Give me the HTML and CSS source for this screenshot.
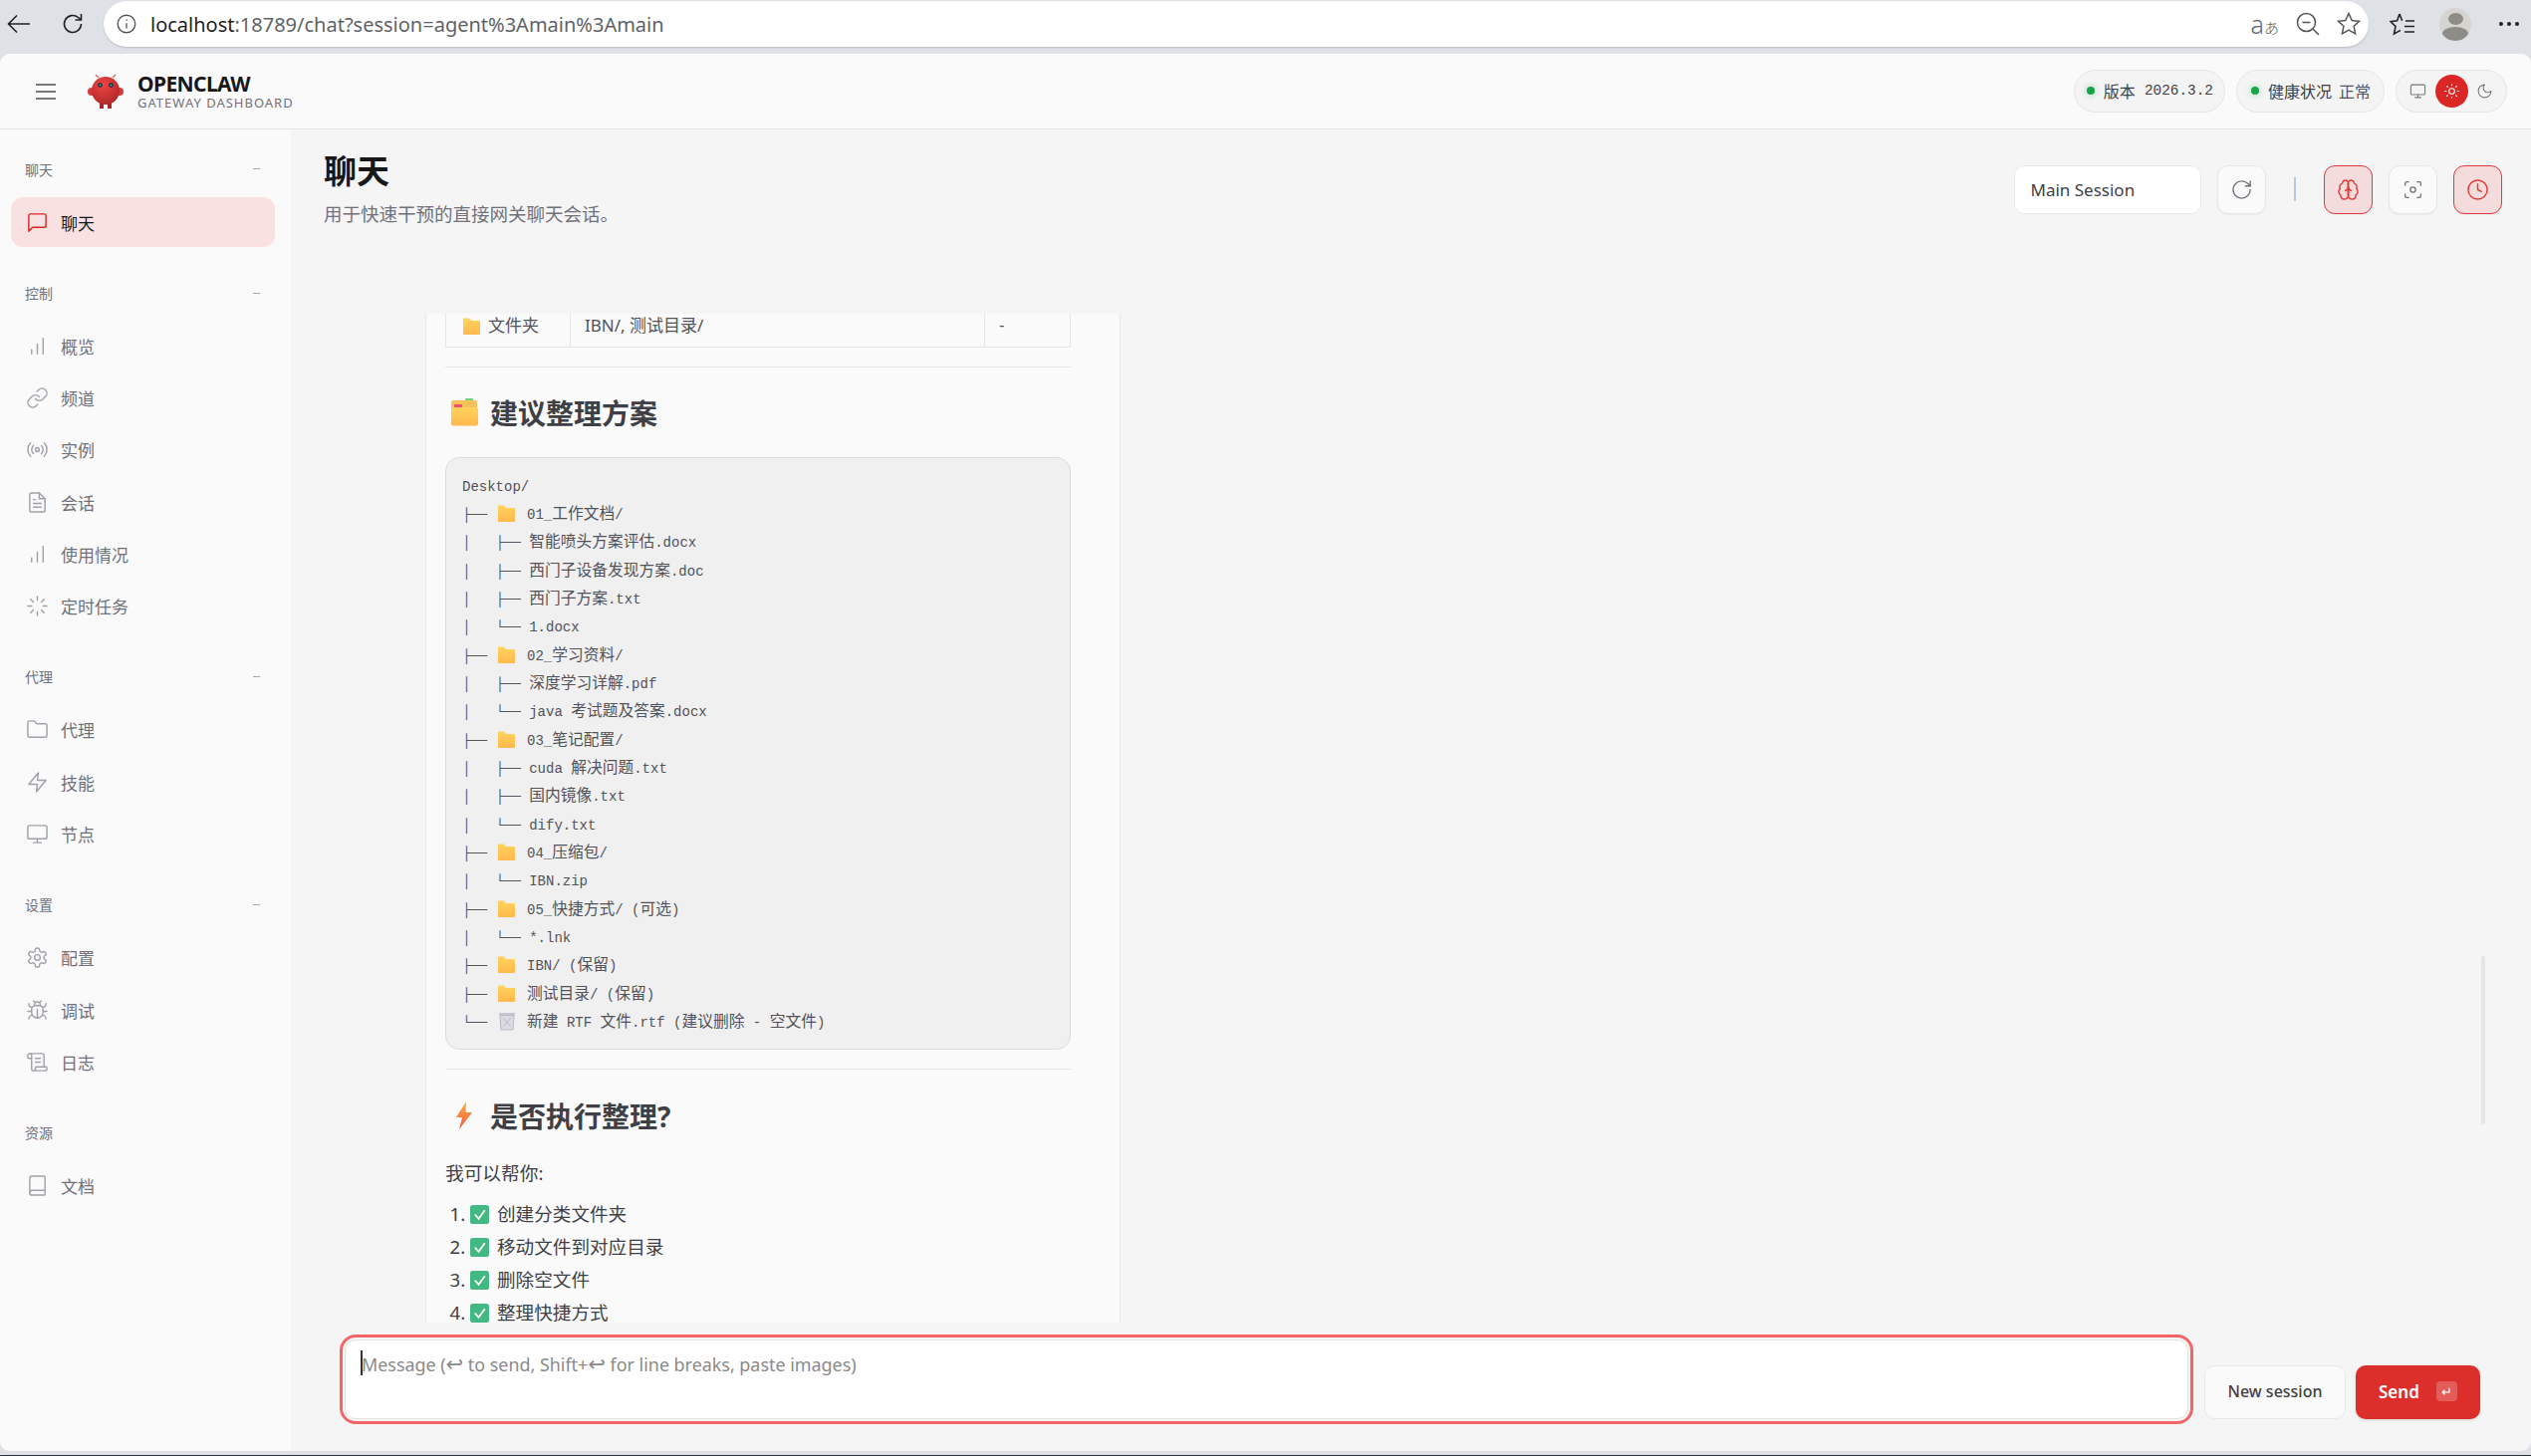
FILE: index.html
```html
<!DOCTYPE html>
<html lang="zh-CN">
<head>
    <meta charset="UTF-8">
    <title>OpenClaw - 聊天</title>
    <link rel="stylesheet" href="styles.css">
</head>
<body>
    <svg class="defs" width="0" height="0">
        <defs>
            <linearGradient id="folderFill" x1="0" y1="0" x2="0" y2="1">
                <stop offset="0" stop-color="#ffd35c"/>
                <stop offset="1" stop-color="#ffb84d"/>
            </linearGradient>
            <linearGradient id="boltFill" x1="0" y1="0" x2="0" y2="1">
                <stop offset="0" stop-color="#fdb043"/>
                <stop offset="1" stop-color="#f4583f"/>
            </linearGradient>
            <radialGradient id="clawFill" cx="0.4" cy="0.3" r="0.8">
                <stop offset="0" stop-color="#ee4444"/>
                <stop offset="1" stop-color="#a92626"/>
            </radialGradient>
            <symbol id="emoji-folder" viewBox="0 0 20 20">
                <path d="M1 3.500a1 1 0 0 1 1-1h5l2 2.500h8a1 1 0 0 1 1 1V18a1 1 0 0 1-1 1H2a1 1 0 0 1-1-1z" fill="url(#folderFill)"/>
            </symbol>
        </defs>
    </svg>

    <!-- Browser toolbar -->
    <div class="browser-bar">
        <svg class="browser-icon back-icon" viewBox="0 0 24 24"><path d="M23 12H2M10 3.500 1.500 12l8.500 8.500"/></svg>
        <svg class="browser-icon reload-icon" viewBox="0 0 24 24"><path d="M20.500 12a8.500 8.500 0 1 1-3-6.500L20.500 8M20.500 2v6h-6"/></svg>
        <div class="address-bar">
            <svg class="site-info" viewBox="0 0 24 24"><circle cx="12" cy="12" r="10.500"/><path d="M12 11v6.500M12 6.500v1.500"/></svg>
            <span class="url"><span class="url-host">localhost</span>:18789/chat?session=agent%3Amain%3Amain</span>
            <span class="translate-glyph">a<small>あ</small></span>
            <svg class="address-icon" viewBox="0 0 24 24"><circle cx="10.500" cy="10.500" r="9"/><path d="M6.500 10.500h8M17 17l6 6"/></svg>
            <svg class="address-icon" viewBox="0 0 24 24"><path d="m12 1.500 3.200 7 7.300.8-5.400 5 1.500 7.500L12 18l-6.600 3.800 1.500-7.500-5.400-5 7.300-.8z"/></svg>
        </div>
        <svg class="browser-icon fav-icon" viewBox="0 0 26 26"><path d="M10 2 7.600 8.800 1 9.600l5 4.800L4.500 22l6.500-3.600M10 2l2.600 6.800M16 9h9M15 14.500h10M15 20h10"/></svg>
        <div class="avatar"><span class="avatar-head"></span><span class="avatar-body"></span></div>
        <div class="browser-dots"><i></i><i></i><i></i></div>
    </div>

    <div class="app">
        <!-- Top bar -->
        <header class="topbar">
            <svg class="hamburger" viewBox="0 0 20 16"><path d="M0 1h20M0 8h20M0 15h20"/></svg>
            <svg class="logo" viewBox="0 0 36 36">
                <path d="M11 4 8 1M25 4l3-3" stroke="#e26a6a" stroke-width="1.500" fill="none"/>
                <rect x="12" y="28" width="4" height="7" fill="#a92626"/>
                <rect x="20" y="28" width="4" height="7" fill="#a92626"/>
                <circle cx="4" cy="18" r="4" fill="#d63a3a"/>
                <circle cx="32" cy="18" r="4" fill="#d63a3a"/>
                <circle cx="18" cy="17" r="14" fill="url(#clawFill)"/>
                <circle cx="12.500" cy="11.500" r="2.200" fill="#10282c"/>
                <circle cx="23.500" cy="11.500" r="2.200" fill="#10282c"/>
                <circle cx="12.500" cy="11.500" r="1" fill="#22c8c8"/>
                <circle cx="23.500" cy="11.500" r="1" fill="#22c8c8"/>
            </svg>
            <div class="brand">
                <div class="brand-name">OPENCLAW</div>
                <div class="brand-sub">GATEWAY DASHBOARD</div>
            </div>
            <div class="topbar-right">
                <div class="status-pill pill-version"><i class="dot"></i><span>版本</span><span class="mono">2026.3.2</span></div>
                <div class="status-pill"><i class="dot"></i><span>健康状况</span><span class="pill-value">正常</span></div>
                <div class="theme-switch">
                    <span class="theme-btn"><svg class="icon" viewBox="0 0 24 24"><rect x="2" y="3" width="20" height="14" rx="2"/><path d="M8 21h8M12 17v4"/></svg></span>
                    <span class="theme-btn active"><svg class="icon" viewBox="0 0 24 24"><circle cx="12" cy="12" r="4"/><path d="M12 2v2M12 20v2M4.930 4.930l1.410 1.410M17.660 17.660l1.410 1.410M2 12h2M20 12h2M6.340 17.660l-1.410 1.410M19.070 4.930l-1.410 1.410"/></svg></span>
                    <span class="theme-btn"><svg class="icon" viewBox="0 0 24 24"><path d="M12 3a6 6 0 0 0 9 9 9 9 0 1 1-9-9Z"/></svg></span>
                </div>
            </div>
        </header>

        <div class="layout">
            <!-- Sidebar -->
            <nav class="sidebar">
                <div class="nav-label"><span>聊天</span><i class="nav-dash"></i></div>
                <a class="nav-item active"><svg class="icon" viewBox="0 0 24 24"><path d="M21 15a2 2 0 0 1-2 2H7l-4 4V5a2 2 0 0 1 2-2h14a2 2 0 0 1 2 2z"/></svg>聊天</a>

                <div class="nav-label"><span>控制</span><i class="nav-dash"></i></div>
                <a class="nav-item"><svg class="icon" viewBox="0 0 24 24"><path d="M18 20V4M12 20v-10M6 20v-4"/></svg>概览</a>
                <a class="nav-item"><svg class="icon" viewBox="0 0 24 24"><path d="M10 13a5 5 0 0 0 7.540.540l3-3a5 5 0 0 0-7.070-7.070l-1.720 1.710"/><path d="M14 11a5 5 0 0 0-7.540-.540l-3 3a5 5 0 0 0 7.070 7.070l1.710-1.710"/></svg>频道</a>
                <a class="nav-item"><svg class="icon" viewBox="0 0 24 24"><path d="M4.900 19.100C1 15.200 1 8.800 4.900 4.900"/><path d="M7.800 16.200c-2.300-2.300-2.300-6.100 0-8.500"/><circle cx="12" cy="12" r="2"/><path d="M16.200 7.800c2.300 2.300 2.300 6.100 0 8.500"/><path d="M19.100 4.900C23 8.800 23 15.100 19.100 19"/></svg>实例</a>
                <a class="nav-item"><svg class="icon" viewBox="0 0 24 24"><path d="M14 2H6a2 2 0 0 0-2 2v16a2 2 0 0 0 2 2h12a2 2 0 0 0 2-2V8z"/><path d="M14 2v6h6M16 13H8M16 17H8M10 9H8"/></svg>会话</a>
                <a class="nav-item"><svg class="icon" viewBox="0 0 24 24"><path d="M18 20V4M12 20v-10M6 20v-4"/></svg>使用情况</a>
                <a class="nav-item"><svg class="icon" viewBox="0 0 24 24"><path d="M12 2v4M12 18v4M4.930 4.930l2.830 2.830M16.240 16.240l2.830 2.830M2 12h4M18 12h4M4.930 19.070l2.830-2.830M16.240 7.760l2.830-2.830"/></svg>定时任务</a>

                <div class="nav-label"><span>代理</span><i class="nav-dash"></i></div>
                <a class="nav-item"><svg class="icon" viewBox="0 0 24 24"><path d="M20 20a2 2 0 0 0 2-2V8a2 2 0 0 0-2-2h-7.900a2 2 0 0 1-1.690-.9L9.600 3.900A2 2 0 0 0 7.930 3H4a2 2 0 0 0-2 2v13a2 2 0 0 0 2 2Z"/></svg>代理</a>
                <a class="nav-item"><svg class="icon" viewBox="0 0 24 24"><path d="M13 2 3 14h9l-1 8 10-12h-9z"/></svg>技能</a>
                <a class="nav-item"><svg class="icon" viewBox="0 0 24 24"><rect x="2" y="3" width="20" height="14" rx="2"/><path d="M8 21h8M12 17v4"/></svg>节点</a>

                <div class="nav-label"><span>设置</span><i class="nav-dash"></i></div>
                <a class="nav-item"><svg class="icon" viewBox="0 0 24 24"><path d="M12.220 2h-.44a2 2 0 0 0-2 2v.18a2 2 0 0 1-1 1.730l-.43.25a2 2 0 0 1-2 0l-.15-.08a2 2 0 0 0-2.730.73l-.22.38a2 2 0 0 0 .73 2.730l.15.1a2 2 0 0 1 1 1.720v.51a2 2 0 0 1-1 1.740l-.15.09a2 2 0 0 0-.73 2.730l.22.38a2 2 0 0 0 2.730.73l.15-.08a2 2 0 0 1 2 0l.43.25a2 2 0 0 1 1 1.730V20a2 2 0 0 0 2 2h.44a2 2 0 0 0 2-2v-.18a2 2 0 0 1 1-1.730l.43-.25a2 2 0 0 1 2 0l.15.08a2 2 0 0 0 2.730-.73l.22-.39a2 2 0 0 0-.73-2.730l-.15-.08a2 2 0 0 1-1-1.740v-.5a2 2 0 0 1 1-1.740l.15-.09a2 2 0 0 0 .73-2.730l-.22-.38a2 2 0 0 0-2.730-.73l-.15.08a2 2 0 0 1-2 0l-.43-.25a2 2 0 0 1-1-1.730V4a2 2 0 0 0-2-2z"/><circle cx="12" cy="12" r="3"/></svg>配置</a>
                <a class="nav-item"><svg class="icon" viewBox="0 0 24 24"><path d="m8 2 1.880 1.880M14.120 3.880 16 2M9 7.130v-1a3 3 0 1 1 6 0v1"/><path d="M12 20c-3.300 0-6-2.700-6-6v-3a4 4 0 0 1 4-4h4a4 4 0 0 1 4 4v3c0 3.300-2.700 6-6 6M12 20v-9M6.530 9C4.600 8.800 3 7.100 3 5M6 13H2M3 21c0-2.100 1.700-3.900 3.800-4M20.970 5c0 2.100-1.600 3.800-3.500 4M22 13h-4M17.200 17c2.100.1 3.800 1.900 3.800 4"/></svg>调试</a>
                <a class="nav-item"><svg class="icon" viewBox="0 0 24 24"><path d="M15 12h-5M15 8h-5M19 17V5a2 2 0 0 0-2-2H4"/><path d="M8 21h12a2 2 0 0 0 2-2v-1a1 1 0 0 0-1-1H11a1 1 0 0 0-1 1v1a2 2 0 1 1-4 0V5a2 2 0 1 0-4 0v2a1 1 0 0 0 1 1h3"/></svg>日志</a>

                <div class="nav-label"><span>资源</span></div>
                <a class="nav-item"><svg class="icon" viewBox="0 0 24 24"><path d="M4 19.500v-15A2.500 2.500 0 0 1 6.500 2H19a1 1 0 0 1 1 1v18a1 1 0 0 1-1 1H6.500a2.500 2.500 0 0 1-2.500-2.500 2.500 2.500 0 0 1 2.500-2.500H20"/></svg>文档</a>
            </nav>

            <!-- Main area -->
            <main class="main">
                <div class="page-head">
                    <div>
                        <h1>聊天</h1>
                        <p class="page-sub">用于快速干预的直接网关聊天会话。</p>
                    </div>
                    <div class="head-actions">
                        <div class="session-select">Main Session</div>
                        <button class="icon-btn"><svg class="icon" viewBox="0 0 24 24"><path d="M21 12a9 9 0 1 1-9-9c2.520 0 4.930 1 6.740 2.740L21 8"/><path d="M21 3v5h-5"/></svg></button>
                        <span class="head-divider"></span>
                        <button class="icon-btn on"><svg class="icon" viewBox="0 0 24 24"><path d="M12 5a3 3 0 1 0-5.997.125 4 4 0 0 0-2.526 5.770 4 4 0 0 0 .556 6.588A4 4 0 1 0 12 18Z"/><path d="M12 5a3 3 0 1 1 5.997.125 4 4 0 0 1 2.526 5.770 4 4 0 0 1-.556 6.588A4 4 0 1 1 12 18Z"/><path d="M15 13a4.500 4.500 0 0 1-3-4 4.500 4.500 0 0 1-3 4M12 18V5"/></svg></button>
                        <button class="icon-btn"><svg class="icon small" viewBox="0 0 24 24"><path d="M3 7V5a2 2 0 0 1 2-2h2M17 3h2a2 2 0 0 1 2 2v2M21 17v2a2 2 0 0 1-2 2h-2M7 21H5a2 2 0 0 1-2-2v-2"/><circle cx="12" cy="12" r="3"/></svg></button>
                        <button class="icon-btn on"><svg class="icon" viewBox="0 0 24 24"><circle cx="12" cy="12" r="10"/><path d="M12 6v6l4 2"/></svg></button>
                    </div>
                </div>

                <div class="thread">
                    <div class="bubble">
                        <table class="file-table">
                            <tr>
                                <td class="col-type"><svg class="emoji" viewBox="0 0 20 20"><use href="#emoji-folder"/></svg>文件夹</td>
                                <td class="col-name">IBN/, 测试目录/</td>
                                <td class="col-size">-</td>
                            </tr>
                        </table>
                        <hr class="rule">
                        <h2>
                            <svg class="emoji-big" viewBox="0 0 28 28">
                                <rect x="15" y="0" width="8" height="5" rx="1" fill="#6dd47e"/>
                                <rect x="9" y="3" width="8" height="5" rx="1" fill="#3f8fdc"/>
                                <rect x="1" y="2" width="26" height="25" rx="2" fill="#f7c25a"/>
                                <rect x="4" y="6" width="8" height="3" fill="#f0506e"/>
                                <rect x="1" y="9" width="27" height="18.500" rx="2" fill="url(#folderFill)"/>
                            </svg>
                            建议整理方案
                        </h2>
                        <div class="tree">
                            <div>Desktop/</div>
                            <div>├── <svg class="tree-emoji" viewBox="0 0 20 20"><use href="#emoji-folder"/></svg> 01_<span class="zh">工作文档</span>/</div>
                            <div>│   ├── <span class="zh">智能喷头方案评估</span>.docx</div>
                            <div>│   ├── <span class="zh">西门子设备发现方案</span>.doc</div>
                            <div>│   ├── <span class="zh">西门子方案</span>.txt</div>
                            <div>│   └── 1.docx</div>
                            <div>├── <svg class="tree-emoji" viewBox="0 0 20 20"><use href="#emoji-folder"/></svg> 02_<span class="zh">学习资料</span>/</div>
                            <div>│   ├── <span class="zh">深度学习详解</span>.pdf</div>
                            <div>│   └── java <span class="zh">考试题及答案</span>.docx</div>
                            <div>├── <svg class="tree-emoji" viewBox="0 0 20 20"><use href="#emoji-folder"/></svg> 03_<span class="zh">笔记配置</span>/</div>
                            <div>│   ├── cuda <span class="zh">解决问题</span>.txt</div>
                            <div>│   ├── <span class="zh">国内镜像</span>.txt</div>
                            <div>│   └── dify.txt</div>
                            <div>├── <svg class="tree-emoji" viewBox="0 0 20 20"><use href="#emoji-folder"/></svg> 04_<span class="zh">压缩包</span>/</div>
                            <div>│   └── IBN.zip</div>
                            <div>├── <svg class="tree-emoji" viewBox="0 0 20 20"><use href="#emoji-folder"/></svg> 05_<span class="zh">快捷方式</span>/ (<span class="zh">可选</span>)</div>
                            <div>│   └── *.lnk</div>
                            <div>├── <svg class="tree-emoji" viewBox="0 0 20 20"><use href="#emoji-folder"/></svg> IBN/ (<span class="zh">保留</span>)</div>
                            <div>├── <svg class="tree-emoji" viewBox="0 0 20 20"><use href="#emoji-folder"/></svg> <span class="zh">测试目录</span>/ (<span class="zh">保留</span>)</div>
                            <div>└── <svg class="tree-emoji" viewBox="0 0 20 20"><path d="M2 2h16v2.500H2z" fill="#c9c7d2"/><path d="M3 4.500h14l-1 14.500H4z" fill="#dcdae2" stroke="#b9b6c6" stroke-width="1"/><path d="m6 7 8 9M14 7l-8 9" stroke="#bdbacb" stroke-width="1"/></svg> <span class="zh">新建</span> RTF <span class="zh">文件</span>.rtf (<span class="zh">建议删除</span> - <span class="zh">空文件</span>)</div>
                        </div>
                        <hr class="rule">
                        <h2 class="h2-run">
                            <svg class="emoji-big" viewBox="0 0 28 28"><path d="M16 0 6 16h6l-3 12 13-17h-6.500z" fill="url(#boltFill)"/></svg>
                            是否执行整理?
                        </h2>
                        <p class="lead">我可以帮你:</p>
                        <ol class="todo">
                            <li><svg class="check" viewBox="0 0 20 20"><rect width="20" height="20" rx="3" fill="#42b883"/><path d="m5 10 4 4.500L15.500 5.500" fill="none" stroke="#fff" stroke-width="1.800"/></svg>创建分类文件夹</li>
                            <li><svg class="check" viewBox="0 0 20 20"><rect width="20" height="20" rx="3" fill="#42b883"/><path d="m5 10 4 4.500L15.500 5.500" fill="none" stroke="#fff" stroke-width="1.800"/></svg>移动文件到对应目录</li>
                            <li><svg class="check" viewBox="0 0 20 20"><rect width="20" height="20" rx="3" fill="#42b883"/><path d="m5 10 4 4.500L15.500 5.500" fill="none" stroke="#fff" stroke-width="1.800"/></svg>删除空文件</li>
                            <li><svg class="check" viewBox="0 0 20 20"><rect width="20" height="20" rx="3" fill="#42b883"/><path d="m5 10 4 4.500L15.500 5.500" fill="none" stroke="#fff" stroke-width="1.800"/></svg>整理快捷方式</li>
                        </ol>
                    </div>
                    <span class="scroll-thumb"></span>
                </div>

                <!-- Composer -->
                <div class="composer-row">
                    <div class="composer">
                        <div class="composer-inner"><i class="caret"></i>Message (<span class="enter-glyph">↩</span> to send, Shift+<span class="enter-glyph">↩</span> for line breaks, paste images)</div>
                    </div>
                    <button class="btn-new">New session</button>
                    <button class="btn-send">Send<span class="kbd">↵</span></button>
                </div>
            </main>
        </div>
    </div>
    <div class="bottom-edge"></div>
</body>
</html>
```

FILE: styles.css
```css
/* Page */
html, body {
    height: 100%;
    overflow: hidden;
}

body {
    margin: 0;
    background-color: #dee1e6;
    color: #444;
    font-family: "Noto Sans", "Noto Sans CJK SC", sans-serif;
}

.defs {
    position: absolute;
}

.icon {
    width: 23px;
    height: 23px;
    fill: none;
    stroke: currentColor;
    stroke-width: 1.5;
    stroke-linecap: round;
    stroke-linejoin: round;
    flex: none;
}

/* Browser toolbar */
.browser-bar {
    height: 54px;
    display: flex;
    align-items: flex-start;
    box-sizing: border-box;
    padding-left: 7px;
}

.browser-icon {
    fill: none;
    stroke: #222;
    stroke-width: 1.6;
    flex: none;
}

.back-icon {
    width: 24px;
    height: 24px;
    margin-top: 12px;
}

.reload-icon {
    width: 24px;
    height: 24px;
    margin: 12px 0 0 30px;
}

.address-bar {
    width: 2274px;
    height: 46px;
    margin: 1px 0 0 19px;
    padding: 0 8px 0 13px;
    box-sizing: border-box;
    background-color: #fff;
    border-radius: 23px;
    box-shadow: 0 1px 2px rgba(0, 0, 0, 0.18);
    display: flex;
    align-items: center;
}

.site-info {
    width: 20px;
    height: 20px;
    fill: none;
    stroke: #555;
    stroke-width: 1.6;
    flex: none;
}

.url {
    margin-left: 14px;
    font-size: 20px;
    color: #5f6368;
    flex: 1;
}

.url-host {
    color: #1f1f1f;
}

.translate-glyph {
    font-size: 25px;
    font-weight: 300;
    line-height: 1;
    color: #666;
}

.translate-glyph small {
    font-size: 15px;
}

.address-icon {
    width: 24px;
    height: 24px;
    margin-left: 17px;
    fill: none;
    stroke: #555;
    stroke-width: 1.5;
    flex: none;
}

.fav-icon {
    width: 26px;
    height: 26px;
    margin: 12px 0 0 21px;
}

.avatar {
    width: 32px;
    height: 33px;
    margin: 8px 0 0 24px;
    border-radius: 50%;
    background-color: #d5d4d0;
    overflow: hidden;
    display: flex;
    flex-direction: column;
    align-items: center;
    flex: none;
}

.avatar-head {
    width: 15px;
    height: 17px;
    margin-top: 5px;
    border-radius: 50%;
    background-color: #8e8c87;
}

.avatar-body {
    width: 26px;
    height: 20px;
    margin-top: 2px;
    border-radius: 50%;
    background-color: #8e8c87;
}

.browser-dots {
    display: flex;
    gap: 4px;
    margin: 22px 0 0 28px;
}

.browser-dots i {
    width: 4px;
    height: 4px;
    border-radius: 50%;
    background-color: #222;
}

/* App shell */
.app {
    height: 1403px;
    background-color: #f5f5f5;
    border-radius: 10px;
    overflow: hidden;
    display: flex;
    flex-direction: column;
}

.bottom-edge {
    height: 5px;
    background: linear-gradient(#dfe1e5 0 4px, #2a3040 4px);
}

.topbar {
    height: 76px;
    flex: none;
    box-sizing: border-box;
    border-bottom: 1px solid #e5e5e5;
    background-color: #fafafa;
    display: flex;
    align-items: center;
    padding: 0 24px 0 36px;
}

.hamburger {
    width: 20px;
    height: 16px;
    fill: none;
    stroke: #777;
    stroke-width: 1.8;
    flex: none;
}

.logo {
    width: 36px;
    height: 36px;
    margin-left: 32px;
    flex: none;
}

.brand {
    margin-left: 14px;
}

.brand-name {
    font-size: 21px;
    line-height: 22px;
    font-weight: 700;
    color: #18181b;
    letter-spacing: -0.6px;
}

.brand-sub {
    font-size: 13px;
    line-height: 16px;
    color: #71717a;
    letter-spacing: 1px;
}

.topbar-right {
    margin-left: auto;
    display: flex;
    align-items: center;
    gap: 11px;
}

.status-pill {
    height: 43px;
    box-sizing: border-box;
    padding: 0 13px 2px 14px;
    display: flex;
    align-items: center;
    gap: 9px;
    border: 1px solid #e5e5e5;
    border-radius: 22px;
    background-color: #f4f4f5;
    font-size: 16px;
    color: #3f3f46;
}

.pill-version {
    padding-left: 12px;
    padding-right: 11px;
}

.status-pill .dot {
    width: 8px;
    height: 8px;
    border-radius: 50%;
    background-color: #16a34a;
    box-shadow: 0 0 6px rgba(22, 163, 74, 0.4);
}

.mono {
    font-family: "Liberation Mono", monospace;
    font-size: 14.4px;
}

.pill-value {
    margin-left: -2px;
    color: #52525b;
}

.theme-switch {
    height: 43px;
    box-sizing: border-box;
    width: 112px;
    padding: 0 5px;
    display: flex;
    align-items: center;
    justify-content: space-between;
    border: 1px solid #e5e5e5;
    border-radius: 22px;
    background-color: #f4f4f5;
    color: #777;
}

.theme-btn {
    width: 33px;
    height: 33px;
    border-radius: 50%;
    display: flex;
    align-items: center;
    justify-content: center;
}

.theme-btn .icon {
    width: 17px;
    height: 17px;
}

.theme-btn.active {
    background-color: #dc2626;
    color: #fff;
}

.layout {
    flex: 1;
    min-height: 0;
    display: flex;
}

/* Sidebar */
.sidebar {
    width: 292px;
    flex: none;
    box-sizing: border-box;
    padding-top: 29px;
    background-color: #fafafa;
}

.nav-label {
    height: 21px;
    margin: 0 31px 18px 25px;
    display: flex;
    align-items: center;
    justify-content: space-between;
    font-size: 14px;
    color: #71717a;
}

.nav-dash {
    width: 7px;
    height: 1px;
    background-color: #aaa;
}

.nav-item {
    height: 50px;
    margin: 0 16px 2.2px 11px;
    padding-left: 14.5px;
    display: flex;
    align-items: center;
    gap: 12.5px;
    border-radius: 12px;
    font-size: 17px;
    color: #71717a;
}

.nav-item .icon {
    color: #a1a1aa;
}

.nav-item.active {
    background-color: #f9e1e1;
    color: #18181b;
}

.nav-item.active .icon {
    color: #dc2626;
}

.nav-item + .nav-label {
    margin-top: 35.5px;
}

/* Main header */
.main {
    flex: 1;
    min-width: 0;
    display: flex;
    flex-direction: column;
}

.page-head {
    height: 185px;
    flex: none;
    box-sizing: border-box;
    padding: 19px 29px 0 33px;
    display: flex;
    justify-content: space-between;
}

h1 {
    margin: 0;
    font-size: 33px;
    line-height: 46px;
    font-weight: 700;
    color: #18181b;
}

.page-sub {
    margin: 7px 0 0;
    font-size: 18.5px;
    line-height: 26px;
    color: #71717a;
}

.head-actions {
    display: flex;
    align-items: center;
    height: 50px;
    margin-top: 16px;
}

.session-select {
    width: 188px;
    height: 49px;
    box-sizing: border-box;
    padding-left: 16px;
    display: flex;
    align-items: center;
    background-color: #fff;
    border: 1px solid #e8e8e8;
    border-radius: 10px;
    font-size: 17px;
    color: #3f3f46;
}

.icon-btn {
    width: 49px;
    height: 49px;
    padding: 0;
    display: flex;
    align-items: center;
    justify-content: center;
    background-color: #fafafa;
    border: 1px solid #e8e8e8;
    border-radius: 11px;
    color: #71717a;
    box-shadow: 0 1px 2px rgba(0, 0, 0, 0.05);
    margin-left: 16px;
}

.icon-btn .icon.small {
    width: 21px;
    height: 21px;
}

.icon-btn.on {
    background-color: #f5dcdc;
    border-color: #e23b3b;
    color: #e23b3b;
}

.head-divider {
    width: 2px;
    height: 24px;
    background-color: #b3c9e2;
    margin: 0 13px 0 28.5px;
}

.head-divider + .icon-btn {
    margin-left: 15px;
}

/* Message thread */
.thread {
    flex: 1;
    min-height: 0;
    padding-left: 135px;
    position: relative;
    overflow: hidden;
}

.bubble {
    width: 698px;
    height: 100%;
    box-sizing: border-box;
    padding: 0 49px 0 19px;
    background-color: #fafafa;
    border: solid #e8e8e8;
    border-width: 0 1px;
    overflow: hidden;
}

.file-table {
    width: 100%;
    margin-top: -12px;
    border-collapse: collapse;
    font-size: 17px;
    color: #52525b;
}

.file-table td {
    height: 45px;
    padding: 0;
    border: 1px solid #e5e5e5;
    border-top: none;
    box-sizing: border-box;
}

.col-type {
    width: 125px;
    padding-left: 16px !important;
}

.emoji {
    width: 20px;
    height: 20px;
    margin-right: 6px;
    vertical-align: -4px;
}

.col-name {
    padding-left: 14px !important;
}

.col-size {
    width: 86px;
    padding-left: 14px !important;
}

.rule {
    margin: 19px 0 0;
    border: none;
    border-top: 1px solid #e5e5e5;
}

h2 {
    margin: 25px 0 0;
    height: 40px;
    display: flex;
    align-items: center;
    gap: 12px;
    font-size: 28px;
    font-weight: 700;
    color: #3f3f46;
}

.h2-run {
    margin-top: 26px;
}

.emoji-big {
    width: 28px;
    height: 28px;
    margin-left: 5px;
    flex: none;
}

/* Folder tree */
.tree {
    margin-top: 25px;
    padding: 15px 16px 12px;
    box-sizing: border-box;
    height: 595px;
    background-color: #f0f0f0;
    border: 1px solid #dcdcdc;
    border-radius: 14px;
    font-family: "Liberation Mono", "Noto Sans CJK SC", monospace;
    font-size: 14px;
    color: #52525b;
}

.tree div {
    height: 28.35px;
    line-height: 28.35px;
    white-space: pre;
}

.zh {
    font-size: 15.75px;
}

.tree-emoji {
    width: 20px;
    height: 20px;
    margin: 0 2px 0 1px;
    vertical-align: -4px;
}

.lead {
    margin: 25px 0 0;
    font-size: 18.7px;
    line-height: 26px;
    color: #3f3f46;
}

.todo {
    margin: 11px 0 0;
    padding: 0 0 0 25px;
    font-size: 18.6px;
    color: #3f3f46;
}

.todo li {
    height: 33px;
    line-height: 33px;
}

.check {
    width: 19px;
    height: 19px;
    margin-right: 8px;
    vertical-align: -3px;
}

.scroll-thumb {
    position: absolute;
    left: 2199px;
    top: 645px;
    width: 4px;
    height: 169px;
    border-radius: 2px;
    background-color: #e5e5e7;
}

/* Composer */
.composer-row {
    height: 129px;
    flex: none;
    box-sizing: border-box;
    padding: 12px 0 0 49px;
    display: flex;
    align-items: flex-start;
}

.composer {
    width: 1861px;
    height: 90px;
    box-sizing: border-box;
    padding: 2px;
    border: 3px solid #f56565;
    border-radius: 16px;
    flex: none;
}

.composer-inner {
    height: 100%;
    box-sizing: border-box;
    padding: 11px 0 0 16px;
    background-color: #fff;
    border: 1px solid #e4e4e4;
    border-radius: 11px;
    font-size: 17.9px;
    line-height: 26px;
    color: #8a8a8a;
    position: relative;
}

.enter-glyph {
    font-family: "DejaVu Sans", sans-serif;
    font-size: 21px;
    line-height: 0;
}

.caret {
    position: absolute;
    left: 15px;
    top: 10px;
    width: 2px;
    height: 25px;
    background-color: #333;
}

.btn-new {
    width: 142px;
    height: 54px;
    margin: 31px 0 0 11px;
    padding: 0 0 3px;
    background-color: #fafafa;
    border: 1px solid #e8e8e8;
    border-radius: 10px;
    font: inherit;
    font-size: 16px;
    font-weight: 500;
    color: #3f3f46;
}

.btn-send {
    width: 125px;
    height: 54px;
    margin: 31px 0 0 10px;
    padding: 0 23px 2px;
    display: flex;
    align-items: center;
    justify-content: space-between;
    background-color: #dc2f2b;
    border: none;
    border-radius: 10px;
    box-shadow: 0 1px 3px rgba(0, 0, 0, 0.15);
    font: inherit;
    font-size: 17px;
    font-weight: 600;
    color: #fff;
}

.kbd {
    width: 21px;
    height: 20px;
    display: flex;
    align-items: center;
    justify-content: center;
    border-radius: 4px;
    background-color: rgba(255, 255, 255, 0.22);
    font-size: 13px;
    font-weight: 400;
}
```
